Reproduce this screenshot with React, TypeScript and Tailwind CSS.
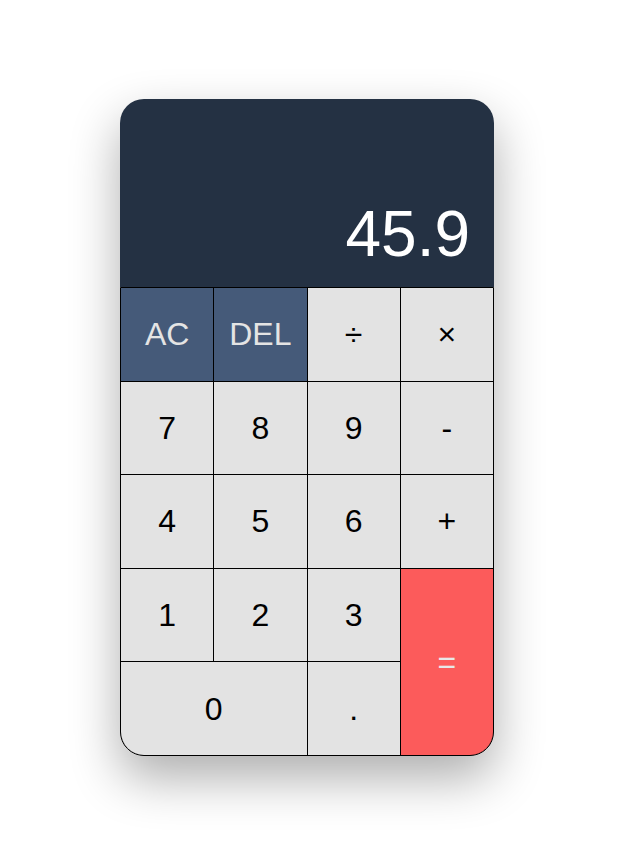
import React from 'react';

type Key = {
  label: string;
  kind?: 'op' | 'fn' | 'eq';
  span?: string;
};

const KEYS: Key[] = [
  { label: 'AC', kind: 'fn' },
  { label: 'DEL', kind: 'fn' },
  { label: '÷' },
  { label: '×' },
  { label: '7' },
  { label: '8' },
  { label: '9' },
  { label: '-' },
  { label: '4' },
  { label: '5' },
  { label: '6' },
  { label: '+' },
  { label: '1' },
  { label: '2' },
  { label: '3' },
  { label: '=', kind: 'eq', span: 'row-span-2' },
  { label: '0', span: 'col-span-2' },
  { label: '.' },
];

function keyClass(k: Key) {
  if (k.kind === 'fn') return 'bg-[#455a79] text-[#e4e4e4]';
  if (k.kind === 'eq') return 'bg-[#fc5b5b] text-[#e8e8e8]';
  return 'bg-[#e3e3e3] text-black';
}

export default function App() {
  return (
    <main
      className="flex min-h-screen items-center justify-center bg-white pr-[8px]"
      style={{ fontFamily: '"Liberation Sans", Arial, sans-serif' }}
    >
      <div className="mt-[2px] w-[374px] rounded-3xl shadow-[0_22px_50px_rgba(0,0,0,0.32)]">
        <div className="flex h-[188px] items-end justify-end rounded-t-3xl bg-[#243143] px-6 pb-[21px]">
          <span className="text-[64px] leading-none text-white">45.9</span>
        </div>
        <div className="grid h-[469px] grid-cols-4 grid-rows-5 gap-px overflow-hidden rounded-b-3xl border border-black bg-black">
          {KEYS.map((k) => (
            <button
              key={k.label}
              className={`flex items-center justify-center text-[32px] ${keyClass(k)} ${k.span ?? ''}`}
            >
              {k.label}
            </button>
          ))}
        </div>
      </div>
    </main>
  );
}
